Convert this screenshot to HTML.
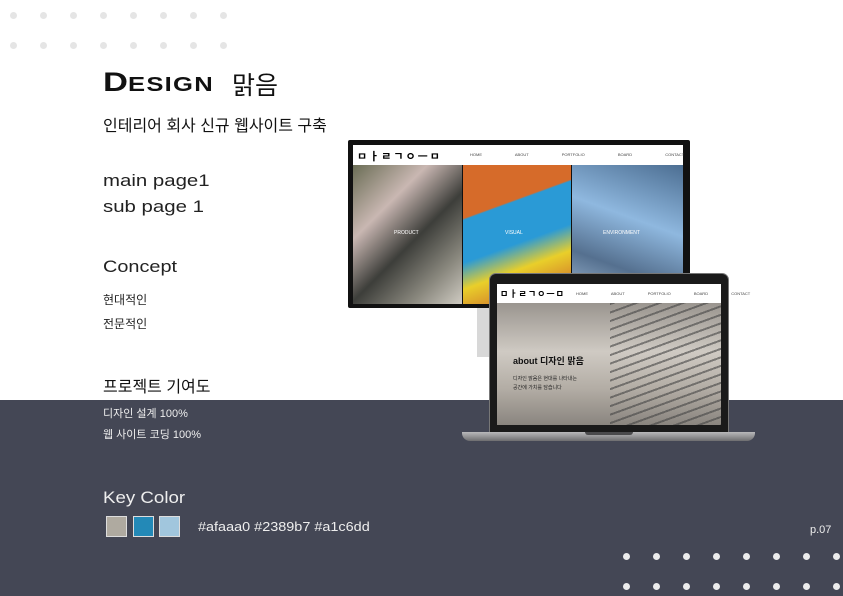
<!DOCTYPE html>
<html><head><meta charset="utf-8"><style>
*{margin:0;padding:0;box-sizing:border-box}
body{width:843px;height:596px;position:relative;overflow:hidden;background:#fff;font-family:"Liberation Sans","Noto Sans CJK KR",sans-serif}
.a{position:absolute}
.dot{position:absolute;width:7px;height:7px;border-radius:50%}
.band{left:0;top:400px;width:843px;height:196px;background:#444755}
.t{position:absolute;white-space:nowrap;transform-origin:0 0}
</style></head><body>
<div class="a band"></div>
<div id="dots"></div>
<div class="t" style="left:103px;top:67px;font-family:'Liberation Sans',sans-serif;font-weight:bold;color:#111;transform:scaleX(1.28)"><span style="font-size:27px">D</span><span style="font-size:20px;letter-spacing:1px">ESIGN</span></div>
<div class="t" style="left:232px;top:66px;font-family:'Noto Sans CJK KR',sans-serif;font-size:25px;color:#111">맑음</div>
<div class="t" style="left:103px;top:112px;font-size:16px;color:#111">인테리어 회사 신규 웹사이트 구축</div>
<div class="t" style="left:103px;top:168px;font-size:17px;line-height:26px;color:#222;transform:scaleX(1.2)">main page1<br>sub page 1</div>
<div class="t" style="left:103px;top:257px;font-size:17px;color:#222;transform:scaleX(1.17)">Concept</div>
<div class="t" style="left:103px;top:288px;font-size:12px;line-height:24px;color:#222">현대적인<br>전문적인</div>
<div class="t" style="left:103px;top:373px;font-size:16px;color:#111">프로젝트 기여도</div>
<div class="t" style="left:103px;top:404px;font-size:11px;line-height:21px;color:#eee">디자인 설계 100%<br>웹 사이트 코딩 100%</div>
<div class="t" style="left:103px;top:488px;font-size:17px;color:#eee;transform:scaleX(1.1)">Key Color</div>
<div class="a" style="left:106px;top:516px;width:21px;height:21px;background:#afaaa0;border:1px solid #ddd"></div>
<div class="a" style="left:133px;top:516px;width:21px;height:21px;background:#2389b7;border:1px solid #ddd"></div>
<div class="a" style="left:159px;top:516px;width:21px;height:21px;background:#a1c6dd;border:1px solid #ddd"></div>
<div class="t" style="left:198px;top:519px;font-size:13px;color:#eee;transform:scaleX(1.11)">#afaaa0 #2389b7 #a1c6dd</div>
<div class="t" style="left:810px;top:524px;font-size:11px;color:#eee">p.07</div>

<div class="a" style="left:477px;top:305px;width:16px;height:52px;background:#d8d8d8"></div>
<div class="a" style="left:348px;top:140px;width:342px;height:168px;background:#111;border-radius:2px"></div>
<div class="a" style="left:353px;top:145px;width:330px;height:20px;background:#fff"></div>
<div class="t" style="left:357px;top:148px;font-size:11px;font-weight:bold;letter-spacing:2px">ㅁㅏㄹㄱㅇㅡㅁ</div>
<div class="t" style="left:470px;top:152px;font-size:4px;color:#444;word-spacing:32px">HOME ABOUT PORTFOLIO BOARD CONTACT</div>
<div class="a" style="left:353px;top:165px;width:109px;height:139px;background:linear-gradient(135deg,#6a6d55,#c9b7b2 30%,#3d3e3a 55%,#8c8a80 80%,#cfcbc2)"></div>
<div class="a" style="left:463px;top:165px;width:108px;height:139px;background:linear-gradient(160deg,#d66b2a 30%,#2a9ad6 31%,#2a9ad6 55%,#e9cf2a 70%,#c3492a)"></div>
<div class="a" style="left:572px;top:165px;width:111px;height:139px;background:linear-gradient(200deg,#4c6e92,#8fb8df 40%,#55708f 70%,#a9c3dd)"></div>
<div class="t" style="left:394px;top:230px;font-size:5px;color:#fff">PRODUCT</div>
<div class="t" style="left:505px;top:230px;font-size:5px;color:#fff">VISUAL</div>
<div class="t" style="left:603px;top:230px;font-size:5px;color:#fff">ENVIRONMENT</div>
<div class="a" style="left:489px;top:273px;width:240px;height:161px;background:#1a1a1a;border-radius:7px 7px 0 0;border:1px solid #777"></div>
<div class="a" style="left:497px;top:284px;width:224px;height:19px;background:#fff"></div>
<div class="t" style="left:500px;top:287px;font-size:9px;font-weight:bold;letter-spacing:1px">ㅁㅏㄹㄱㅇㅡㅁ</div>
<div class="t" style="left:576px;top:291px;font-size:4px;color:#444;word-spacing:22px">HOME ABOUT PORTFOLIO BOARD CONTACT</div>
<div class="a" style="left:497px;top:303px;width:224px;height:122px;background:linear-gradient(180deg,#9a958f,#cfcac3 40%,#b3ada5 70%,#8a857f)"></div>
<div class="a" style="left:610px;top:303px;width:111px;height:122px;background:repeating-linear-gradient(160deg,#444 0 2px,transparent 2px 8px);opacity:.6"></div>
<div class="t" style="left:513px;top:354px;font-size:9px;font-weight:bold;color:#111">about 디자인 맑음</div>
<div class="t" style="left:513px;top:375px;font-size:5px;line-height:9px;color:#222">디자인 맑음은 현대를 나타내는<br>공간에 가치를 담습니다</div>
<div class="a" style="left:462px;top:432px;width:293px;height:9px;background:linear-gradient(#b9b9bb,#6e6e70);border-radius:0 0 8px 8px"></div>
<div class="a" style="left:585px;top:432px;width:48px;height:3px;background:#4a4a4c;border-radius:0 0 3px 3px"></div>
<script>
var h='';
for(var r=0;r<2;r++)for(var i=0;i<8;i++){
h+='<div class="dot" style="left:'+(10+i*30)+'px;top:'+(12+r*30)+'px;background:#e5e5e5"></div>';
h+='<div class="dot" style="left:'+(623+i*30)+'px;top:'+(553+r*30)+'px;background:#ececec"></div>';}
document.getElementById('dots').innerHTML=h;
</script>
</body></html>
